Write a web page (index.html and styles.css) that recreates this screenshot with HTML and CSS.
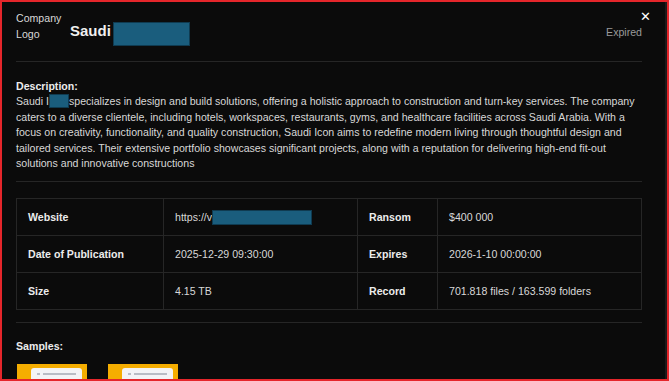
FILE: index.html
```html
<!DOCTYPE html>
<html lang="en">
<head>
    <meta charset="UTF-8">
    <meta name="viewport" content="width=device-width, initial-scale=1.0">
    <title>Saudi - Details</title>
    <link rel="stylesheet" href="styles.css">
</head>
<body>
    <div class="modal">
        <button class="close-btn" aria-label="Close">&#x2715;</button>
        <div class="modal-header">
            <div class="company-logo">Company Logo</div>
            <div class="company-name">Saudi<span class="redact redact-title"></span></div>
            <div class="status">Expired</div>
        </div>

        <div class="description">
            <div class="section-title">Description:</div>
            Saudi I<span class="redact redact-inline"></span>specializes in design and build solutions, offering a holistic approach to construction and turn-key services. The company caters to a diverse clientele, including hotels, workspaces, restaurants, gyms, and healthcare facilities across Saudi Arabia. With a focus on creativity, functionality, and quality construction, Saudi Icon aims to redefine modern living through thoughtful design and tailored services. Their extensive portfolio showcases significant projects, along with a reputation for delivering high-end fit-out solutions and innovative constructions
        </div>

        <div class="details">
            <table class="info-table">
                <colgroup>
                    <col class="col-label">
                    <col class="col-value">
                    <col class="col-label2">
                    <col>
                </colgroup>
                <tr>
                    <th>Website</th>
                    <td>https://v<span class="redact redact-url"></span></td>
                    <th>Ransom</th>
                    <td>$400 000</td>
                </tr>
                <tr>
                    <th>Date of Publication</th>
                    <td>2025-12-29 09:30:00</td>
                    <th>Expires</th>
                    <td>2026-1-10 00:00:00</td>
                </tr>
                <tr>
                    <th>Size</th>
                    <td>4.15 TB</td>
                    <th>Record</th>
                    <td>701.818 files / 163.599 folders</td>
                </tr>
            </table>
        </div>

        <div class="samples">
            <div class="section-title">Samples:</div>
            <div class="sample-list">
                <div class="sample"><div class="sample-card"><span class="dot"></span><span class="bar"></span></div></div>
                <div class="sample"><div class="sample-card"><span class="dot"></span><span class="bar"></span></div></div>
            </div>
        </div>
    </div>
</body>
</html>
```

FILE: styles.css
```css
html, body {
    margin: 0;
    height: 100%;
}
body {
    box-sizing: border-box;
    border: 2px solid #e5262b;
    background: #1c1c1c;
    font-family: "Liberation Sans", Arial, sans-serif;
    font-size: 10.6px;
    color: #d8d8d8;
    overflow: hidden;
}
.modal {
    position: relative;
    height: 100%;
    margin-right: 2px;
    padding: 9px 23px 0 14px;
    background: #0b0b0b;
}
.close-btn {
    position: absolute;
    top: 7px;
    right: 14px;
    background: none;
    border: none;
    color: #fff;
    font-size: 13px;
    font-weight: bold;
    padding: 0;
    cursor: pointer;
    font-family: "DejaVu Sans", sans-serif;
}
.modal-header {
    display: flex;
    align-items: flex-start;
    padding-bottom: 15px;
    border-bottom: 1px solid #262626;
}
.company-logo {
    width: 50px;
    line-height: 15.5px;
    margin-right: 4px;
}
.company-name {
    margin-top: 8px;
    font-size: 15px;
    line-height: 24px;
    font-weight: bold;
    color: #f0f0f0;
}
.redact {
    display: inline-block;
    box-sizing: border-box;
    background: #1a5d7d;
    border: 1px solid #0f3b51;
}
.redact-title {
    width: 77px;
    height: 24px;
    margin-left: 2px;
    vertical-align: -10px;
}
.redact-inline {
    width: 20px;
    height: 14px;
    vertical-align: -3px;
}
.redact-url {
    width: 100px;
    height: 15px;
    vertical-align: -4px;
}
.status {
    margin-left: auto;
    margin-top: 15px;
    color: #9a9a9a;
}
.section-title {
    font-weight: bold;
    color: #ececec;
}
.description {
    padding: 17px 0 10px;
    line-height: 15.4px;
    border-bottom: 1px solid #262626;
}
.details {
    padding: 16px 0 12px;
    border-bottom: 1px solid #262626;
}
.info-table {
    width: 100%;
    border-collapse: collapse;
    table-layout: fixed;
}
.col-label { width: 147px; }
.col-value { width: 194px; }
.col-label2 { width: 80px; }
.info-table th,
.info-table td {
    border: 1px solid #262626;
    height: 36px;
    padding: 0 11px;
    text-align: left;
    vertical-align: middle;
}
.info-table th {
    font-weight: bold;
    color: #ececec;
}
.samples {
    padding-top: 17px;
}
.sample-list {
    display: flex;
    gap: 21px;
    margin-top: 12px;
    padding-left: 1px;
}
.sample {
    width: 70px;
    height: 60px;
    background: #f5ad00;
    padding: 4px 0 0 14px;
    box-sizing: border-box;
}
.sample-card {
    display: flex;
    align-items: flex-start;
    gap: 3px;
    width: 51px;
    height: 40px;
    background: #f3f3f5;
    border-radius: 3px;
    padding: 5px 6px 0;
    box-sizing: border-box;
}
.dot {
    width: 3px;
    height: 2px;
    background: #b9bcc4;
}
.bar {
    width: 33px;
    height: 2px;
    background: #b9bcc4;
}
```
